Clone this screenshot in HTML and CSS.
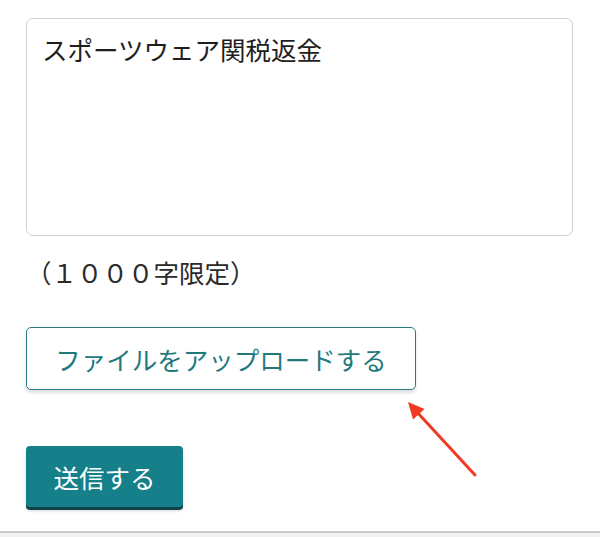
FILE: index.html
```html
<!DOCTYPE html>
<html lang="ja">
<head>
<meta charset="utf-8">
<link rel="stylesheet" href="styles.css">
</head>
<body>
<div class="form">
  <textarea class="message">スポーツウェア関税返金</textarea>
  <p class="note">（１０００字限定）</p>
  <button class="upload" type="button">ファイルをアップロードする</button>
  <button class="submit" type="button">送信する</button>
</div>
<div class="footer-line"></div>
<svg class="arrow" width="600" height="537" viewBox="0 0 600 537">
  <line x1="475" y1="475" x2="416" y2="411" stroke="#f03a22" stroke-width="3" stroke-linecap="round"/>
  <polygon points="408,402 424.5,409 413,419.5" fill="#f03a22"/>
</svg>
</body>
</html>
```
FILE: styles.css
```css
html, body {
  margin: 0;
  padding: 0;
  background: #ffffff;
}
body {
  width: 600px;
  height: 537px;
  overflow: hidden;
  position: relative;
  font-family: "Noto Sans CJK JP", "Noto Sans", sans-serif;
  color: #222222;
}
.form {
  display: flex;
  flex-direction: column;
  align-items: flex-start;
  padding: 18px 0 0 26px;
}
.message {
  box-sizing: border-box;
  width: 547px;
  height: 218px;
  margin: 0;
  padding: 12px 15px;
  border: 1px solid #cfcfcf;
  border-radius: 7px;
  font-family: "Noto Sans CJK JP", sans-serif;
  font-size: 25.5px;
  line-height: 36px;
  color: #1e1e1e;
  resize: none;
  background: #fff;
}
.note {
  margin: 18px 0 0 0;
  font-size: 25.5px;
  line-height: 36px;
  color: #2a2a2a;
}
.upload {
  box-sizing: border-box;
  margin-top: 37px;
  width: 390px;
  height: 63px;
  padding: 0;
  border: 1.5px solid #2a7b80;
  border-radius: 5px;
  background: #ffffff;
  color: #1f7a80;
  font-family: "Noto Sans CJK JP", sans-serif;
  font-size: 25.5px;
  box-shadow: 0 3px 3px rgba(0, 0, 0, 0.12);
}
.submit {
  box-sizing: border-box;
  margin-top: 56px;
  width: 157px;
  height: 61px;
  padding: 0;
  border: none;
  border-radius: 4px;
  background: #15808a;
  color: #ffffff;
  font-family: "Noto Sans CJK JP", sans-serif;
  font-size: 25.5px;
  box-shadow: 0 3px 0 #0b4349, 0 4px 3px rgba(0, 0, 0, 0.15);
}
.footer-line {
  position: absolute;
  left: 0;
  right: 0;
  top: 531px;
  height: 6px;
  border-top: 2px solid #c9c9c9;
  background: #f1f1f1;
  box-sizing: border-box;
}
.arrow {
  position: absolute;
  left: 0;
  top: 0;
  pointer-events: none;
}
```
